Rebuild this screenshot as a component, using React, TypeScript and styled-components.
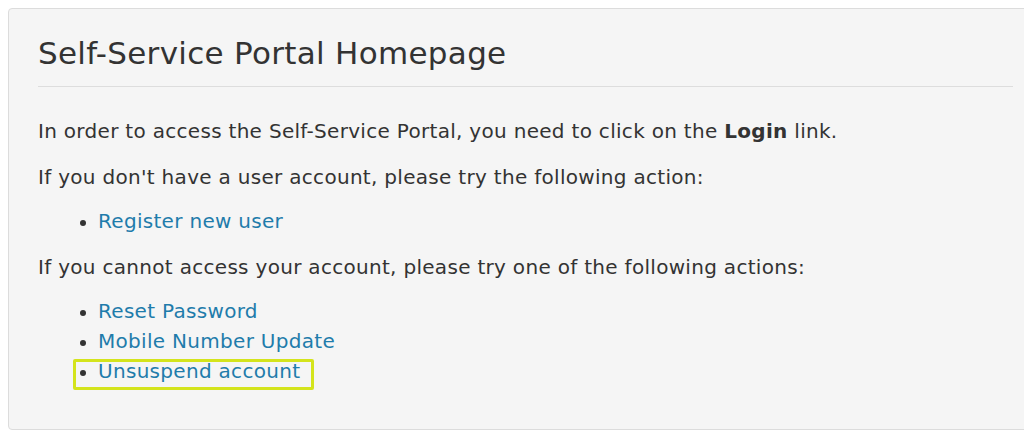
import styled, { createGlobalStyle } from 'styled-components';

const GlobalStyle = createGlobalStyle`
  html, body {
    margin: 0;
    padding: 0;
    background: #fff;
  }
  body {
    padding: 8px 0 0 8px;
    overflow: hidden;
    font-family: "DejaVu Sans", "Noto Sans", sans-serif;
    color: #333;
  }
`;

const Panel = styled.section`
  box-sizing: border-box;
  width: calc(100% + 20px);
  height: 422px;
  padding: 24px 0 0 29px;
  background: #f5f5f5;
  border: 1px solid #dcdcdc;
  border-radius: 4px 0 0 4px;
`;

const Heading = styled.h1`
  margin: 0 30px 0 0;
  padding-bottom: 13px;
  border-bottom: 1px solid #dddddd;
  font-size: 31px;
  line-height: 40px;
  letter-spacing: 0.3px;
  font-weight: 400;
  color: #333;
`;

const Body = styled.div`
  padding-top: 29px;
  font-size: 20px;
  line-height: 30px;
  letter-spacing: 0.3px;
`;

const Para = styled.p`
  margin: 0 0 16px;
`;

const List = styled.ul`
  margin: -2px 0 16px;
  padding-left: 60px;
  &:last-child {
    margin-bottom: 0;
  }
`;

const Item = styled.li`
  &::marker {
    color: #333;
    font-size: 18px;
  }
`;

const Link = styled.a`
  color: #1f7cab;
  text-decoration: none;
  cursor: pointer;
`;

const Marked = styled.span`
  position: relative;
  &::after {
    content: '';
    position: absolute;
    left: -25px;
    right: -14px;
    top: 0;
    bottom: -7px;
    border: 3px solid #d4e41c;
    border-radius: 2px;
  }
`;

export default function App() {
  return (
    <>
      <GlobalStyle />
      <Panel>
        <Heading>Self-Service Portal Homepage</Heading>
        <Body>
          <Para>
            In order to access the Self-Service Portal, you need to click on the <b>Login</b> link.
          </Para>
          <Para>If you don't have a user account, please try the following action:</Para>
          <List>
            <Item><Link>Register new user</Link></Item>
          </List>
          <Para>If you cannot access your account, please try one of the following actions:</Para>
          <List>
            <Item><Link>Reset Password</Link></Item>
            <Item><Link>Mobile Number Update</Link></Item>
            <Item>
              <Marked><Link>Unsuspend account</Link></Marked>
            </Item>
          </List>
        </Body>
      </Panel>
    </>
  );
}
